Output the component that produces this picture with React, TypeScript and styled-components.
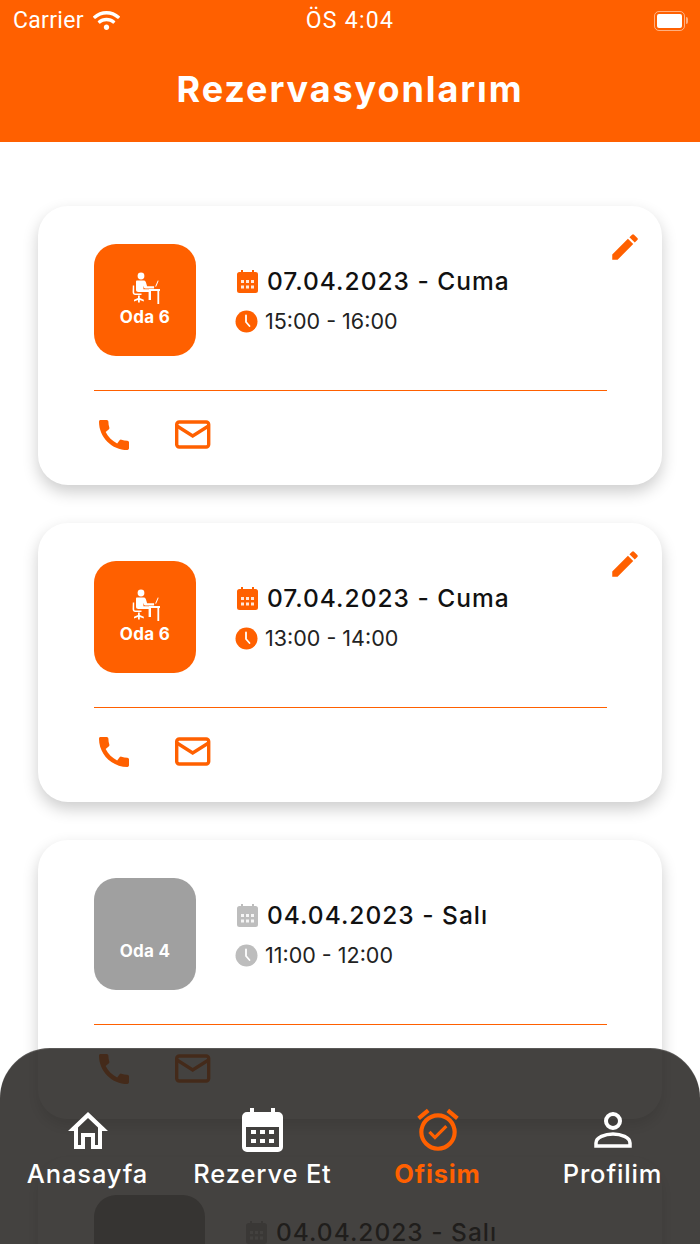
import styled, { createGlobalStyle } from 'styled-components';
import { MdEdit, MdCall, MdOutlineAlarmOn } from 'react-icons/md';
import { FaWifi } from 'react-icons/fa';

const ORANGE = '#ff6000';
const GREY = '#bdbdbd';

const GlobalStyle = createGlobalStyle`
  html, body { margin: 0; padding: 0; background: #fff; }
  * { box-sizing: border-box; }
  body { font-family: Inter, "Noto Sans", sans-serif; }
`;

const Page = styled.div`
  position: relative;
  width: 700px;
  height: 1244px;
  overflow: hidden;
  background: #fff;
`;

const Header = styled.header`
  height: 142px;
  background: ${ORANGE};
  color: #fff;
  padding: 7px 13px 0;
`;

const StatusBar = styled.div`
  display: grid;
  grid-template-columns: 1fr auto 1fr;
  align-items: center;
  height: 26px;
  font-family: Roboto, "Liberation Sans", sans-serif;
  font-size: 23px;
`;

const Carrier = styled.div`
  display: flex;
  align-items: center;
  gap: 9px;
  letter-spacing: 0.3px;
`;

const Clock = styled.span`
  letter-spacing: 1.3px;
`;

const BatteryWrap = styled.div`
  justify-self: end;
  display: flex;
  align-items: center;
  gap: 1px;
  margin-right: -1px;
`;

const BatteryBody = styled.div`
  width: 31px;
  height: 20px;
  padding: 2px;
  border: 1.5px solid rgba(255, 255, 255, 0.5);
  border-radius: 5px;
`;

const BatteryFill = styled.div`
  height: 100%;
  background: #fff;
  border-radius: 2px;
`;

const BatteryTip = styled.div`
  width: 2px;
  height: 7px;
  background: rgba(255, 255, 255, 0.5);
  border-radius: 0 2px 2px 0;
`;

const Title = styled.h1`
  margin: 34px 0 0;
  text-align: center;
  font-size: 36px;
  line-height: 44px;
  font-weight: 700;
  letter-spacing: 1.9px;
`;

const List = styled.main`
  display: flex;
  flex-direction: column;
  gap: 38px;
  padding: 64px 38px 0;
`;

const Card = styled.article`
  position: relative;
  height: 279px;
  padding: 38px 55px 0 56px;
  background: #fff;
  border-radius: 30px;
  box-shadow: 0 7px 16px rgba(0, 0, 0, 0.2);
`;

const EditButton = styled.div`
  position: absolute;
  top: 24px;
  right: 20px;
  color: ${ORANGE};
  font-size: 34px;
  line-height: 0;
`;

const TopRow = styled.div`
  display: flex;
  align-items: center;
  gap: 41px;
  height: 112px;
`;

const RoomTile = styled.div<{ $active: boolean; $wide?: boolean }>`
  flex: none;
  width: ${(p) => (p.$wide ? 111 : 102)}px;
  height: 112px;
  display: flex;
  flex-direction: column;
  align-items: center;
  justify-content: flex-end;
  padding-bottom: 29px;
  gap: 3px;
  border-radius: 22px;
  background: ${(p) => (p.$active ? ORANGE : '#a0a0a0')};
  color: #fff;
  font-size: 17px;
  line-height: 20px;
  font-weight: 700;
  letter-spacing: 0.3px;
`;

const Info = styled.div`
  display: flex;
  flex-direction: column;
  gap: 11px;
  padding-top: 1px;
`;

const InfoRow = styled.div`
  display: flex;
  align-items: center;
  gap: 9px;
  min-height: 28px;
`;

const DateText = styled.span`
  font-size: 24.5px;
  line-height: 30px;
  font-weight: 500;
  color: #111;
  letter-spacing: 1px;
`;

const TimeIconSlot = styled.div`
  margin-left: -2px;
  line-height: 0;
`;

const TimeText = styled.span`
  font-size: 21.5px;
  line-height: 28px;
  font-weight: 400;
  color: #222;
  margin-left: -2px;
`;

const Divider = styled.hr`
  margin: 34px 0 0;
  border: 0;
  height: 1px;
  background: ${ORANGE};
`;

const Actions = styled.div`
  display: flex;
  align-items: center;
  gap: 41px;
  margin-top: 24px;
  color: ${ORANGE};
  line-height: 0;
`;

const TabBar = styled.nav`
  position: absolute;
  left: 0;
  right: 0;
  bottom: 0;
  height: 196px;
  display: grid;
  grid-template-columns: repeat(4, 1fr);
  padding-top: 57px;
  border-radius: 50px 50px 0 0;
  background: rgba(35, 33, 31, 0.85);
  box-shadow: inset 0 1px 0 rgba(255, 255, 255, 0.12);
`;

const Tab = styled.div<{ $active?: boolean }>`
  display: flex;
  flex-direction: column;
  align-items: center;
  color: ${(p) => (p.$active ? ORANGE : '#fff')};
  font-size: 25.5px;
  line-height: 30px;
  letter-spacing: 0.85px;
  font-weight: ${(p) => (p.$active ? 700 : 500)};
`;

const TabIcon = styled.div`
  height: 50px;
  margin-bottom: 4px;
  display: flex;
  align-items: center;
  justify-content: center;
`;

const DeskIcon = () => (
  <svg width="30" height="32" viewBox="0 0 30 32" fill="#fff">
    <circle cx="11" cy="4" r="3.4" />
    <path d="M7 8.5h6.5c1.2 0 2 .7 2.4 1.7l1.2 4h7v2.2h-8.8c-.7 0-1.2-.4-1.4-1l-.5-1.6v3.4h6c1 0 1.6.7 1.6 1.6V28h-2.4v-8H8.4c-1.5 0-2.4-1-2.4-2.3V9.6c0-.6.4-1.1 1-1.1z" />
    <path d="M2.8 13.5h1.4v6.7c0 .7.5 1.3 1.3 1.3h6v1.5H5.2c-1.5 0-2.6-1.2-2.6-2.7z" />
    <path d="M8 23.6h1.8v2.5l4 1.6v1.7l-4-1.4v2.4H8v-2.4l-4 1.4v-1.7l4-1.6z" />
    <path d="M19 17h11v2h-.8v13h-1.8V19H19z" />
    <path d="M25.2 14.4l2.6-6 .9.4-2.6 6z" />
  </svg>
);

const CalendarSmall = ({ color }: { color: string }) => (
  <svg width="21" height="23" viewBox="0 0 21 23">
    <path
      fill={color}
      d="M4 0h2v2h9V0h2v2h1.500A2.500 2.500 0 0 1 21 4.500v16a2.500 2.500 0 0 1-2.500 2.500h-16A2.500 2.500 0 0 1 0 20.500v-16A2.500 2.500 0 0 1 2.500 2H4z"
    />
    <path
      fill="#fff"
      fillOpacity="0.85"
      d="M4 10h3v3H4zm5 0h3v3H9zm5 0h3v3h-3zM4 15.500h3v3H4zm5 0h3v3H9zm5 0h3v3h-3z"
    />
  </svg>
);

const ClockSmall = ({ color }: { color: string }) => (
  <svg width="23" height="23" viewBox="0 0 23 23">
    <circle cx="11.500" cy="11.500" r="11" fill={color} />
    <path d="M11 5.500v6.500l3.500 4" fill="none" stroke="#fff" strokeWidth="1.800" strokeLinecap="round" />
  </svg>
);

const MailIcon = () => (
  <svg width="36" height="30" viewBox="0 0 36 30" fill="none" stroke="currentColor" strokeWidth="3.400">
    <rect x="1.700" y="2" width="32" height="25" rx="2.500" />
    <path d="M2 6l15.700 10L33.500 6" />
  </svg>
);

const HomeIcon = () => (
  <svg width="40" height="37" viewBox="0 0 40 37">
    <path
      fill="#fff"
      fillRule="evenodd"
      d="M20 0l20 19h-6v18H23V25h-6v12H6V19H0zM20 6l-10 9.500V33h3V21h14v12h3V15.500z"
    />
  </svg>
);

const CalendarIcon = () => (
  <svg width="41" height="44" viewBox="0 0 41 44">
    <path
      fill="#fff"
      fillRule="evenodd"
      d="M8 0h4v4h17V0h4v4h3a5 5 0 0 1 5 5v30a5 5 0 0 1-5 5H5a5 5 0 0 1-5-5V9a5 5 0 0 1 5-5h3zM4 19v20h33V19z"
    />
    <path fill="#fff" d="M9 22h5v4H9zm9 0h5v4h-5zm9 0h5v4h-5zM9 31h5v4H9zm9 0h5v4h-5zm9 0h5v4h-5z" />
  </svg>
);

const ProfileIcon = () => (
  <svg width="38" height="36" viewBox="0 0 38 36" fill="none" stroke="#fff">
    <circle cx="19" cy="9" r="7" strokeWidth="4" />
    <path d="M2 34v-3c0-5.500 9-9 17-9s17 3.500 17 9v3z" strokeWidth="3.500" />
  </svg>
);

type Reservation = {
  room: string;
  date: string;
  time: string;
  active: boolean;
  wide?: boolean;
};

const reservations: Reservation[] = [
  { room: 'Oda 6', date: '07.04.2023 - Cuma', time: '15:00 - 16:00', active: true },
  { room: 'Oda 6', date: '07.04.2023 - Cuma', time: '13:00 - 14:00', active: true },
  { room: 'Oda 4', date: '04.04.2023 - Salı', time: '11:00 - 12:00', active: false },
  { room: '', date: '04.04.2023 - Salı', time: '', active: false, wide: true },
];

const App = () => {
  return (
    <Page>
      <GlobalStyle />
      <Header>
        <StatusBar>
          <Carrier>
            Carrier <FaWifi size={27} />
          </Carrier>
          <Clock>ÖS 4:04</Clock>
          <BatteryWrap>
            <BatteryBody>
              <BatteryFill />
            </BatteryBody>
            <BatteryTip />
          </BatteryWrap>
        </StatusBar>
        <Title>Rezervasyonlarım</Title>
      </Header>

      <List>
        {reservations.map((r, i) => {
          const iconColor = r.active ? ORANGE : GREY;
          return (
            <Card key={i}>
              {r.active && (
                <EditButton>
                  <MdEdit />
                </EditButton>
              )}
              <TopRow>
                <RoomTile $active={r.active} $wide={r.wide}>
                  {r.active && <DeskIcon />}
                  {r.room}
                </RoomTile>
                <Info>
                  <InfoRow>
                    <CalendarSmall color={iconColor} />
                    <DateText>{r.date}</DateText>
                  </InfoRow>
                  <InfoRow>
                    <TimeIconSlot>
                      <ClockSmall color={iconColor} />
                    </TimeIconSlot>
                    <TimeText>{r.time}</TimeText>
                  </InfoRow>
                </Info>
              </TopRow>
              <Divider />
              <Actions>
                <MdCall size={40} />
                <MailIcon />
              </Actions>
            </Card>
          );
        })}
      </List>

      <TabBar>
        <Tab>
          <TabIcon>
            <HomeIcon />
          </TabIcon>
          Anasayfa
        </Tab>
        <Tab>
          <TabIcon>
            <CalendarIcon />
          </TabIcon>
          Rezerve Et
        </Tab>
        <Tab $active>
          <TabIcon>
            <MdOutlineAlarmOn size={50} />
          </TabIcon>
          Ofisim
        </Tab>
        <Tab>
          <TabIcon>
            <ProfileIcon />
          </TabIcon>
          Profilim
        </Tab>
      </TabBar>
    </Page>
  );
};

export default App;
